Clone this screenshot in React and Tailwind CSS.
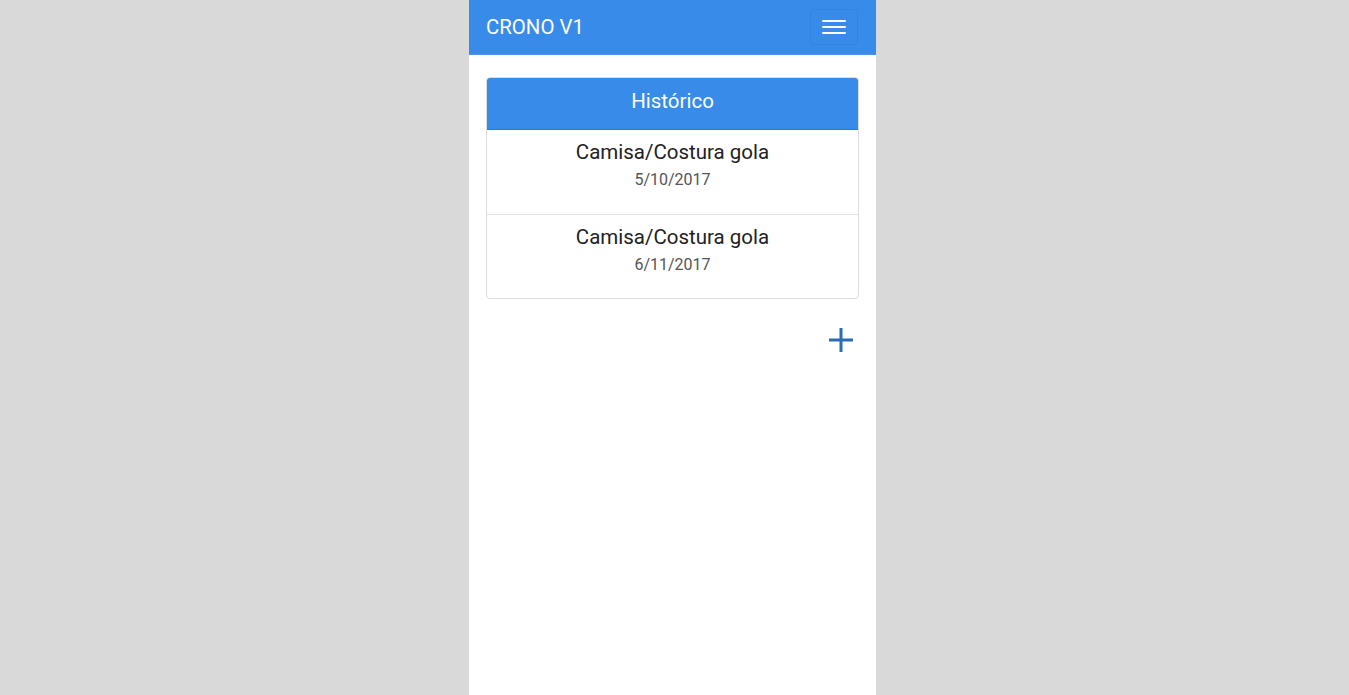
import React from 'react'

const items = [
  { title: 'Camisa/Costura gola', date: '5/10/2017' },
  { title: 'Camisa/Costura gola', date: '6/11/2017' },
]

export default function App() {
  return (
    <div className="min-h-screen bg-[#d9d9d9] flex pl-[469px]" style={{ fontFamily: 'Roboto, "Noto Sans", sans-serif' }}>
      <div className="w-[407px] min-h-screen bg-white">
        <nav className="h-[55px] bg-[#388be8] flex items-center justify-between pl-[17px] pr-[18px] border-b border-[#4b97ec]">
          <span className="text-white text-[20.4px] leading-none">CRONO V1</span>
          <button className="w-[48px] h-[36px] rounded-[4px] border border-[#3583dd] flex flex-col items-center justify-center gap-[4px]">
            <span className="block w-[24px] h-[2px] bg-white rounded-[1px]" />
            <span className="block w-[24px] h-[2px] bg-white rounded-[1px]" />
            <span className="block w-[24px] h-[2px] bg-white rounded-[1px]" />
          </button>
        </nav>

        <div className="px-[17px] pt-[22px]">
          <div className="rounded-[4px] border border-[#dddddd] overflow-hidden">
            <div className="h-[52px] pb-[4px] bg-[#388be8] border-b border-[#2d78d0] flex items-center justify-center text-white text-[20.5px]">
              Histórico
            </div>
            {items.map((it, i) => (
              <div
                key={i}
                className={'h-[84px] flex flex-col items-center pt-[9px] ' + (i > 0 ? 'border-t border-[#e3e3e3]' : '')}
              >
                <span className="text-[20.5px] leading-[26px] text-[#222222]">{it.title}</span>
                <span className="text-[16px] leading-[22px] mt-[4px] text-[#555555]">{it.date}</span>
              </div>
            ))}
          </div>

          <div className="flex justify-end pt-[29px] pr-[6px]">
            <svg width="24" height="24" viewBox="0 0 24 24" aria-hidden="true">
              <path d="M10.5 0h3v10.5H24v3H13.5V24h-3V13.5H0v-3h10.5z" fill="#2a6db5" />
            </svg>
          </div>
        </div>
      </div>
    </div>
  )
}
